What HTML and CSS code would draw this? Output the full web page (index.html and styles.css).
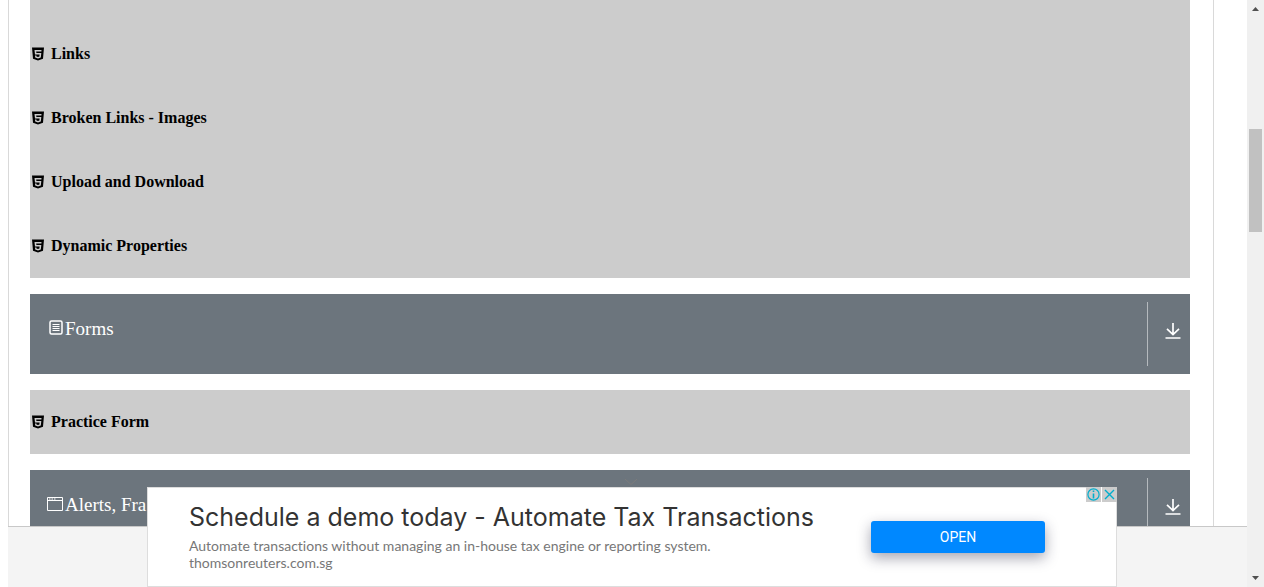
FILE: index.html
```html
<!DOCTYPE html>
<html lang="en">
<head>
<meta charset="utf-8">
<title>Elements</title>
<link rel="stylesheet" href="styles.css">
</head>
<body>
<svg class="symbols" aria-hidden="true">
  <symbol id="html5" viewBox="0 0 12 14"><path fill-rule="evenodd" d="M0 .5h12L11 11.8 6 13.5 1 11.8ZM2.5 3l.5 4.4h4.6l-.2 2L6 9.9l-1.500-.5-.1-1H3l.2 2.100L6 11.500l2.800-1 .5-4.400H4.400L4.200 4.400h5.200L9.500 3Z"/></symbol>
  <symbol id="form" viewBox="0 0 14 16"><rect x="1" y="1" width="12" height="13" rx="1.500" fill="none" stroke="currentColor" stroke-width="1.500"/><path d="M3.500 4.500h7M3.500 6.500h7M3.500 8.500h7M3.500 10.500h7" stroke="currentColor"/></symbol>
  <symbol id="window" viewBox="0 0 18 16"><path d="M1.500 1.500h15v13h-15zM1.500 4.500h15" fill="none" stroke="currentColor"/><path d="M3 3h1.500M5.500 3H7M8 3h1.500" stroke="currentColor"/></symbol>
  <symbol id="download" viewBox="0 0 16 18"><path d="M8 1v11.500M2 6.800l6 5.700 6-5.700M.5 16h15" fill="none" stroke="currentColor" stroke-width="1.700"/></symbol>
</svg>
<div class="page">
  <main class="viewport">
    <div class="content">
      <ul class="items">
        <li class="item item-cut"></li>
        <li class="item"><svg class="badge"><use href="#html5"/></svg>Links</li>
        <li class="item"><svg class="badge"><use href="#html5"/></svg>Broken Links - Images</li>
        <li class="item"><svg class="badge"><use href="#html5"/></svg>Upload and Download</li>
        <li class="item"><svg class="badge"><use href="#html5"/></svg>Dynamic Properties</li>
      </ul>
      <section class="group">
        <h2 class="group-title"><svg class="group-icon"><use href="#form"/></svg>Forms</h2>
        <button class="toggle" aria-label="Expand Forms"><svg class="arrow"><use href="#download"/></svg></button>
      </section>
      <ul class="items">
        <li class="item"><svg class="badge"><use href="#html5"/></svg>Practice Form</li>
      </ul>
      <section class="group">
        <h2 class="group-title"><svg class="group-icon wide"><use href="#window"/></svg>Alerts, Fra</h2>
        <button class="toggle" aria-label="Expand Alerts"><svg class="arrow"><use href="#download"/></svg></button>
      </section>
    </div>
  </main>
  <footer class="footer"></footer>
</div>
<div class="scrollbar" aria-hidden="true">
  <svg class="scroll-arrow" viewBox="0 0 17 17"><path d="M5 11h7L8.500 7Z"/></svg>
  <div class="track"><div class="thumb"></div></div>
  <svg class="scroll-arrow" viewBox="0 0 17 17"><path d="M5 6h7L8.500 10Z"/></svg>
</div>
<aside class="ad">
  <svg class="chevron" viewBox="0 0 14 8"><path d="M1 1l6 5.500L13 1" fill="none" stroke="currentColor"/></svg>
  <div class="ad-copy">
    <h3 class="ad-title">Schedule a demo today - Automate Tax Transactions</h3>
    <p class="ad-text">Automate transactions without managing an in-house tax engine or reporting system.</p>
    <p class="ad-text">thomsonreuters.com.sg</p>
  </div>
  <button class="open">OPEN</button>
  <div class="ad-controls">
    <button class="ad-control" aria-label="Ad information"><svg viewBox="0 0 15 15"><circle cx="7.500" cy="7.500" r="5.600" fill="none" stroke="currentColor" stroke-width="1.200"/><path d="M7.500 6.500v5M7.500 3.500v1.500" stroke="currentColor" stroke-width="1.600"/></svg></button>
    <button class="ad-control" aria-label="Close ad"><svg viewBox="0 0 15 15"><path d="M3 3l9 9M12 3l-9 9" stroke="currentColor" stroke-width="1.400"/></svg></button>
  </div>
</aside>
</body>
</html>
```
FILE: styles.css
```css
* { box-sizing: border-box; }
body {
  margin: 0;
  height: 100vh;
  overflow: hidden;
  display: flex;
  background: #fff;
  font-family: "Liberation Serif", serif;
}
button { border: 0; padding: 0; background: none; color: inherit; }
.symbols { position: absolute; width: 0; height: 0; }
.page {
  flex: 1;
  min-width: 0;
  display: flex;
  flex-direction: column;
  padding-left: 8px;
}
.viewport {
  flex: 1;
  min-height: 0;
  overflow: hidden;
  padding-right: 33px;
  border-bottom: 1px solid #c8c8c8;
}
.content {
  display: flex;
  flex-direction: column;
  gap: 16px;
  padding: 0 23px 0 21px;
  border: solid #d9d9d9;
  border-width: 0 1px;
}
.items { list-style: none; margin: 0; padding: 0; background: #ccc; }
.item {
  display: flex;
  align-items: center;
  gap: 7px;
  height: 64px;
  padding-left: 2px;
  font-size: 16px;
  font-weight: bold;
}
.item-cut { height: 22px; }
.badge { width: 12px; height: 14px; }
.group {
  display: flex;
  height: 80px;
  flex-shrink: 0;
  padding: 8px 0;
  background: #6c757d;
  color: #fff;
}
.group-title {
  flex: 1;
  display: flex;
  align-items: flex-start;
  align-self: flex-start;
  margin: 0;
  padding: 15px 0 0 16px;
  font-size: 19px;
  line-height: 24px;
  font-weight: normal;
}
.group-icon { width: 14px; height: 16px; margin: 3px 2px 0 3px; }
.group-icon.wide { width: 18px; margin: 3px 1px 0 0; }
.toggle {
  width: 43px;
  display: flex;
  align-items: center;
  justify-content: center;
  padding: 0 0 6px 7px;
  border-left: 1px solid #b5babe;
}
.arrow { width: 16px; height: 18px; }
.footer { height: 60px; background: #f4f4f4; }
.scrollbar {
  width: 17px;
  display: flex;
  flex-direction: column;
  background: #f0f0f0;
}
.scroll-arrow { width: 17px; height: 17px; fill: #505050; }
.track { flex: 1; padding: 112px 2px 0; }
.thumb { height: 103px; background: #c1c1c1; }
.ad {
  position: fixed;
  left: 50%;
  bottom: 0;
  transform: translateX(-50%);
  width: 970px;
  max-width: 100%;
  height: 100px;
  display: flex;
  justify-content: space-between;
  padding: 12px 71px 0 41px;
  background: #fff;
  border: 1px solid #ddd;
  font-family: Lato, sans-serif;
  font-variant-ligatures: none;
}
.chevron {
  position: absolute;
  left: 476px;
  top: -10px;
  width: 14px;
  height: 8px;
  color: #7b7b7b;
}
.ad-title {
  margin: 0 0 3px;
  font-family: Inter, sans-serif;
  font-size: 25px;
  line-height: 34px;
  font-weight: normal;
  color: #333;
}
.ad-text {
  margin: 0;
  font-size: 14px;
  line-height: 17px;
  color: #777;
}
.open {
  width: 174px;
  height: 32px;
  margin-top: 21px;
  border-radius: 3px;
  background: #08f;
  color: #fff;
  font: 14px Roboto, sans-serif;
  box-shadow: 0 5px 14px rgba(30, 30, 60, .4);
}
.ad-controls {
  position: absolute;
  top: -1px;
  right: -1px;
  display: flex;
  gap: 1px;
  background: #fff;
}
.ad-control {
  width: 15px;
  height: 15px;
  background: #ccc;
  color: #00aecd;
}
.ad-control svg { display: block; width: 15px; height: 15px; }
```
